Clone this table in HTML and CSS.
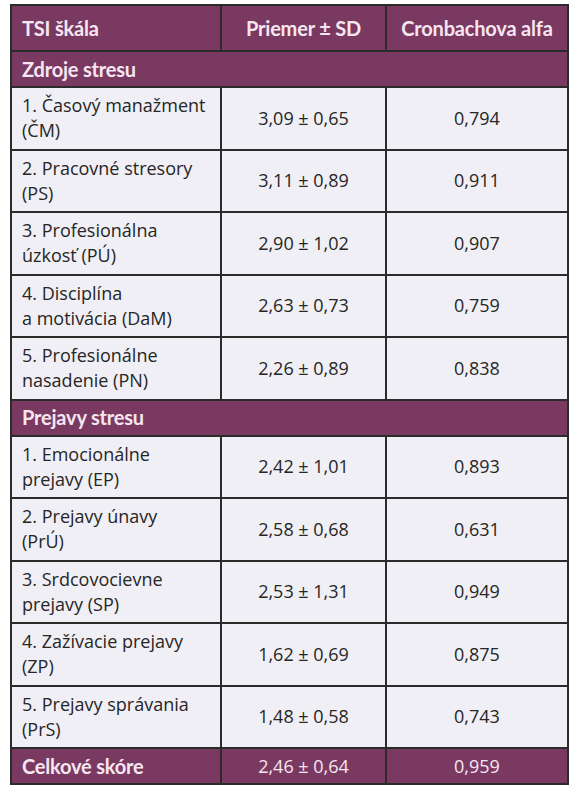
FILE: index.html
```html
<!DOCTYPE html>
<html>
<head>
  <meta charset="utf-8">
  <link rel="stylesheet" href="styles.css">
</head>
<body>
  <table class="tsi-table">
    <colgroup>
      <col class="col-scale">
      <col class="col-mean">
      <col class="col-alpha">
    </colgroup>
    <thead>
      <tr class="head-row">
        <th class="left">TSI škála</th>
        <th>Priemer ± SD</th>
        <th>Cronbachova alfa</th>
      </tr>
    </thead>
    <tbody>
      <tr class="section-row">
        <td colspan="3">Zdroje stresu</td>
      </tr>
      <tr>
        <td class="left">1. Časový manažment<br>(ČM)</td>
        <td>3,09 ± 0,65</td>
        <td>0,794</td>
      </tr>
      <tr>
        <td class="left">2. Pracovné stresory<br>(PS)</td>
        <td>3,11 ± 0,89</td>
        <td>0,911</td>
      </tr>
      <tr>
        <td class="left">3. Profesionálna<br>úzkosť (PÚ)</td>
        <td>2,90 ± 1,02</td>
        <td>0,907</td>
      </tr>
      <tr>
        <td class="left">4. Disciplína<br>a motivácia (DaM)</td>
        <td>2,63 ± 0,73</td>
        <td>0,759</td>
      </tr>
      <tr>
        <td class="left">5. Profesionálne<br>nasadenie (PN)</td>
        <td>2,26 ± 0,89</td>
        <td>0,838</td>
      </tr>
      <tr class="section-row">
        <td colspan="3">Prejavy stresu</td>
      </tr>
      <tr>
        <td class="left">1. Emocionálne<br>prejavy (EP)</td>
        <td>2,42 ± 1,01</td>
        <td>0,893</td>
      </tr>
      <tr>
        <td class="left">2. Prejavy únavy<br>(PrÚ)</td>
        <td>2,58 ± 0,68</td>
        <td>0,631</td>
      </tr>
      <tr>
        <td class="left">3. Srdcovocievne<br>prejavy (SP)</td>
        <td>2,53 ± 1,31</td>
        <td>0,949</td>
      </tr>
      <tr>
        <td class="left">4. Zažívacie prejavy<br>(ZP)</td>
        <td>1,62 ± 0,69</td>
        <td>0,875</td>
      </tr>
      <tr>
        <td class="left">5. Prejavy správania<br>(PrS)</td>
        <td>1,48 ± 0,58</td>
        <td>0,743</td>
      </tr>
      <tr class="total-row">
        <td class="left">Celkové skóre</td>
        <td>2,46 ± 0,64</td>
        <td>0,959</td>
      </tr>
    </tbody>
  </table>
</body>
</html>
```

FILE: styles.css
```css
body {
  margin: 4px 10px;
  background-color: #ffffff;
  font-family: 'Open Sans', Lato, sans-serif;
  color: #262626;
}

.tsi-table {
  width: 559px;
  border-collapse: collapse;
  table-layout: fixed;
  border: 2px solid #2b2b2b;
}

.col-scale {
  width: 210px;
}

.col-mean {
  width: 165px;
}

.tsi-table th,
.tsi-table td {
  border: 2px solid #2b2b2b;
  text-align: center;
  vertical-align: middle;
}

.tsi-table td {
  background-color: #f0eff5;
  font-size: 18px;
  line-height: 25px;
  height: 60.5px;
  padding: 0 10px;
  white-space: nowrap;
}

.tsi-table .left {
  text-align: left;
}

.head-row th,
.section-row td,
.total-row td.left {
  font-family: Lato, 'Open Sans', sans-serif;
  font-weight: 700;
  font-size: 20px;
  letter-spacing: -0.2px;
}

.head-row th {
  background-color: #7a3961;
  color: #f6e6f0;
  height: 44px;
  padding: 0 10px;
}

.section-row td {
  background-color: #7a3961;
  color: #f6e6f0;
  height: 34px;
  text-align: left;
}

.total-row td {
  background-color: #7a3961;
  color: #f6e6f0;
  height: 34px;
}
```
